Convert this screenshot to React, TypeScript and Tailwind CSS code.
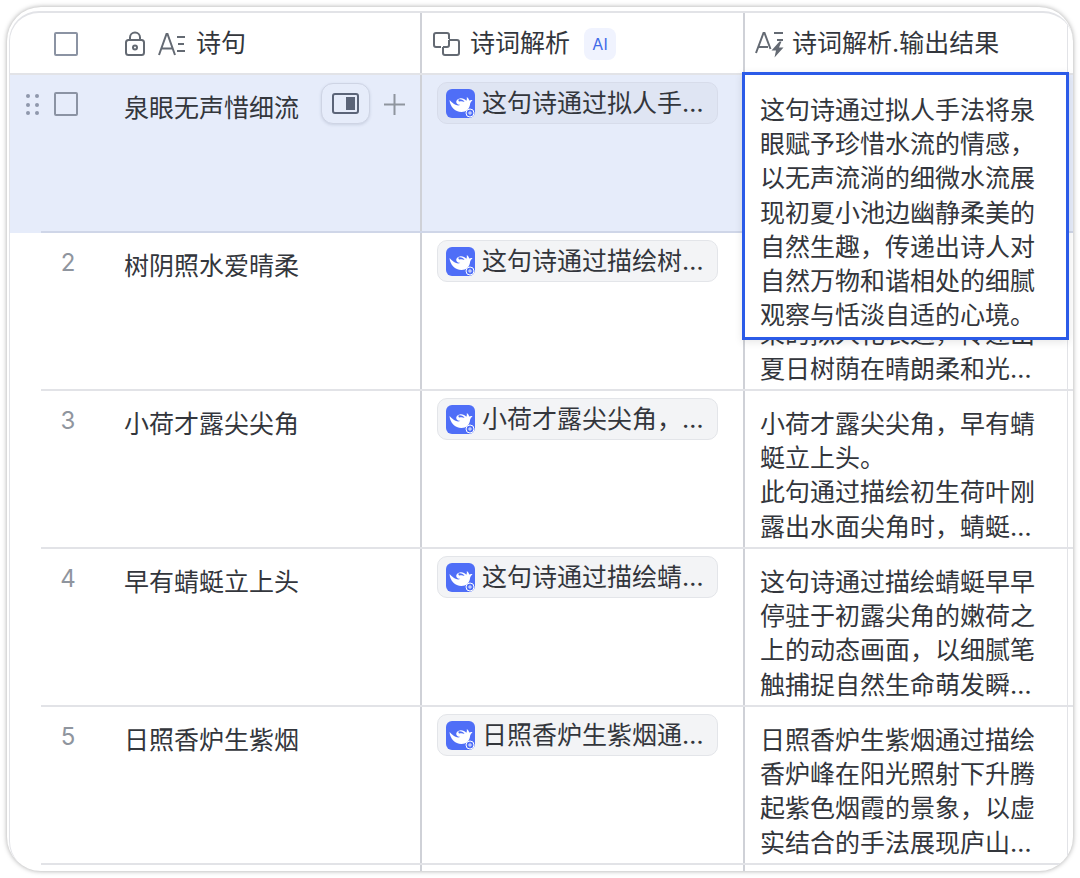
import type { ReactNode } from "react";

const font = { fontFamily: '"Inter", "Noto Sans CJK SC", sans-serif' };

interface Row {
  no: number;
  name: string;
  chip: string;
  result: string;
}

const rows: Row[] = [
  { no: 1, name: "泉眼无声惜细流", chip: "这句诗通过拟人手法将泉眼赋予珍惜水流的情感", result: "" },
  {
    no: 2,
    name: "树阴照水爱晴柔",
    chip: "这句诗通过描绘树荫倒映水面的画面",
    result: "这句诗通过描绘树荫照水的景象，赋予自然生动效果的拟人化表达，传递出夏日树荫在晴朗柔和光影中的静谧之美。",
  },
  {
    no: 3,
    name: "小荷才露尖尖角",
    chip: "小荷才露尖尖角，早有蜻蜓立上头。",
    result: "小荷才露尖尖角，早有蜻蜓立上头。\n此句通过描绘初生荷叶刚露出水面尖角时，蜻蜓已飞落其上的画面。",
  },
  {
    no: 4,
    name: "早有蜻蜓立上头",
    chip: "这句诗通过描绘蜻蜓早早停驻的画面",
    result: "这句诗通过描绘蜻蜓早早停驻于初露尖角的嫩荷之上的动态画面，以细腻笔触捕捉自然生命萌发瞬间的灵动与美好。",
  },
  {
    no: 5,
    name: "日照香炉生紫烟",
    chip: "日照香炉生紫烟通过描绘香炉峰的景象",
    result: "日照香炉生紫烟通过描绘香炉峰在阳光照射下升腾起紫色烟霞的景象，以虚实结合的手法展现庐山瀑布周围的壮丽与神秘。",
  },
  { no: 6, name: "遥看瀑布挂前川", chip: "这句诗通过描绘瀑布的景象", result: "" },
];

function Checkbox() {
  return <div className="h-6 w-6 rounded-[2px] border-[2.500px] border-[#8b93a3]" />;
}

function LockIcon() {
  return (
    <svg width="22" height="26" viewBox="0 0 22 26" fill="none" stroke="#646a73" strokeWidth="2">
      <rect x="2" y="9" width="18" height="15" rx="2.500" />
      <path d="M6 9V6.500a5 5 0 0 1 10 0V9" />
      <circle cx="11" cy="16.500" r="2" />
    </svg>
  );
}

function TextFieldIcon() {
  return (
    <svg width="28" height="24" viewBox="0 0 28 24" fill="none" stroke="#646a73" strokeWidth="2">
      <path d="M1 23 8.500 2h1L17 23M4 16.500h10" />
      <path d="M19 5h8M20 12h6M19 19h8" />
    </svg>
  );
}

function LookupIcon() {
  return (
    <svg width="27" height="24" viewBox="0 0 27 24" fill="none" stroke="#646a73" strokeWidth="2">
      <path d="M8 15H3a2 2 0 0 1-2-2V3a2 2 0 0 1 2-2h11a2 2 0 0 1 2 2v4" />
      <path d="M16 8h8a2 2 0 0 1 2 2v11a2 2 0 0 1-2 2H12a2 2 0 0 1-2-2v-6" />
      <path d="M10 15h4a2 2 0 0 0 2-2V8" />
    </svg>
  );
}

function AiTextIcon() {
  return (
    <svg width="30" height="27" viewBox="0 0 30 27" fill="none" stroke="#646a73" strokeWidth="2">
      <path d="M1 22 8.500 2h1L15.500 18M4 16h9" />
      <path d="M19 2h9M22 9h6" />
      <path d="M24.500 10.500 16.500 19.500h4.500l-1.500 7 9-10h-4.500l2.500-6z" fill="#646a73" stroke="none" />
    </svg>
  );
}

function WhaleLogo() {
  return (
    <svg width="29" height="29" viewBox="0 0 29 29" className="shrink-0">
      <rect width="29" height="29" rx="6" fill="#4f6ef7" />
      <path
        d="M3.500 11c.5 6.500 5.500 12 12 12 5 0 8-3.500 8.500-7.500.2-1.800 1-3.200 2.500-4.300-1.200-.3-2.400-.1-3.300.4-.3-1.500-1.100-2.700-2.400-3.600.2 1.500.1 2.700-.5 3.700-1.500-1.700-4-2.700-6.500-2.200-2.500.5-4 2.200-3.500 4 .4 1.500 2 2.300 4 2.300-1.500 1-4 .8-6.300-.8-1.800-1.200-3.300-2.500-4.500-4z"
        fill="#fff"
      />
      <path d="M12.500 10.500c2.500-.7 5 .5 6 2.500-1.500-.8-3.500-1-5-.5-.8.2-1.500-1.700-1-2z" fill="#4f6ef7" />
      <circle cx="24" cy="24" r="4" fill="#4f6ef7" stroke="#fff" strokeWidth="1" />
      <path d="M22 24h4M24 22v4" stroke="#fff" strokeWidth="0.8" />
    </svg>
  );
}

function Chip({ text, active }: { text: string; active: boolean }) {
  return (
    <div
      className={`flex h-[42px] w-[281px] items-center gap-[6px] rounded-[10px] border pl-2 pr-3 ${
        active ? "border-[#d7dcea] bg-[#dfe5f3]" : "border-[#e3e5e9] bg-[#f3f4f6]"
      }`}
    >
      <WhaleLogo />
      <span className="truncate pl-[1px] text-[25px] leading-[34px] text-[#33363c]">{text}</span>
    </div>
  );
}

function HeaderCell({ children, last }: { children: ReactNode; last?: boolean }) {
  return (
    <div className={`flex h-[60px] items-center pt-[2px] ${last ? "border-r border-[#e2e3e7]" : "border-r-2 border-[#cfd1d7]"}`}>
      {children}
    </div>
  );
}

function TableRow({ row }: { row: Row }) {
  const active = row.no === 1;
  return (
    <div className={`relative grid h-[158px] grid-cols-[412px_323px_323px] ${active ? "bg-[#e6ecfa]" : ""}`}>
      <div className="flex border-r-2 border-[#cfd1d7]">
        <div className="flex w-[114px] shrink-0 items-start pt-[17px]">
          <div className="flex w-[44px] justify-center">
            {active && (
              <div className="grid grid-cols-2 gap-x-[5px] gap-y-[4.500px] pt-[2px]">
                {[0, 1, 2, 3, 4, 5].map((i) => (
                  <div key={i} className="h-1 w-1 rounded-full bg-[#8f98ab]" />
                ))}
              </div>
            )}
          </div>
          {active ? (
            <Checkbox />
          ) : (
            <div className="ml-[2px] w-6 pt-[1px] text-center text-[24px] leading-6 text-[#8f959e]">{row.no}</div>
          )}
        </div>
        <div className="flex-1 pt-[16px] text-[25px] leading-[34px] text-[#33363c]">{row.name}</div>
        {active && (
          <div className="flex items-start gap-[14px] pr-[15px] pt-[8px]">
            <div className="flex h-[41px] w-[49px] items-center justify-center rounded-[12px] border border-[#ced4e4] bg-[#e6ecfa] shadow-[0_1px_3px_rgba(80,90,120,0.18)]">
              <div className="flex h-[21px] w-[27px] justify-end rounded-[3px] border-[2.500px] border-[#5b6478] p-[2px]">
                <div className="h-full w-[9px] bg-[#5b6478]" />
              </div>
            </div>
            <svg width="21" height="21" viewBox="0 0 21 21" className="mt-[11px]" stroke="#8f959e" strokeWidth="2">
              <path d="M10.500 0v21M0 10.500h21" />
            </svg>
          </div>
        )}
      </div>
      <div className="border-r-2 border-[#cfd1d7] pl-[15px] pt-[7px]">
        <Chip text={row.chip} active={active} />
      </div>
      <div className="border-r border-[#e2e3e7] pl-[15px] pr-[30px] pt-[16px]">
        <div className="line-clamp-4 whitespace-pre-line text-[25px] leading-[34.200px] text-[#33363c]">
          {row.result}
        </div>
      </div>
      {!active && row.no < 6 && <div className="absolute bottom-0 left-[31px] right-0 h-[2px] bg-[#e2e3e7]" />}
      {active && <div className="absolute bottom-0 left-[31px] right-0 h-[2px] bg-[#cfd6e8]" />}
    </div>
  );
}

export default function App() {
  return (
    <div className="h-[878px] w-[1080px] bg-white pl-[7px] pt-[7px]" style={font}>
      <div className="relative h-[864px] w-[1066px] overflow-hidden rounded-[34px] bg-white pl-[2px] pt-[4px] shadow-[0_0_5px_rgba(0,0,0,0.35)]">
        <div className="h-full overflow-hidden rounded-[30px] border-l border-t-2 border-[#e2e3e7]">
          <div className="grid grid-cols-[412px_323px_323px] border-b-2 border-[#e2e3e7] text-[25px] text-[#33363c]">
            <HeaderCell>
              <div className="ml-[44px] mr-[46px]">
                <Checkbox />
              </div>
              <LockIcon />
              <div className="ml-[12px] mr-[10px] flex">
                <TextFieldIcon />
              </div>
              <span>诗句</span>
            </HeaderCell>
            <HeaderCell>
              <div className="ml-[11px] mr-[10px] flex">
                <LookupIcon />
              </div>
              <span>诗词解析</span>
              <span className="ml-[14px] flex h-8 w-8 items-center justify-center rounded-[8px] bg-[#f0f3fe] text-[16px] text-[#3f6ae8]">
                AI
              </span>
            </HeaderCell>
            <HeaderCell last>
              <div className="ml-[10px] mr-[7px] flex">
                <AiTextIcon />
              </div>
              <span>诗词解析.输出结果</span>
            </HeaderCell>
          </div>
          {rows.map((row) => (
            <TableRow key={row.no} row={row} />
          ))}
        </div>
        <div className="absolute left-[735px] top-[65px] h-[268px] w-[327px] border-[3px] border-[#2b5be8] bg-white pl-[15px] pt-[18px] shadow-[0_2px_8px_rgba(0,0,0,0.1)]">
          <div className="w-[280px] text-[25px] leading-[34.200px] text-[#33363c]">
            这句诗通过拟人手法将泉眼赋予珍惜水流的情感，以无声流淌的细微水流展现初夏小池边幽静柔美的自然生趣，传递出诗人对自然万物和谐相处的细腻观察与恬淡自适的心境。
          </div>
        </div>
      </div>
    </div>
  );
}
